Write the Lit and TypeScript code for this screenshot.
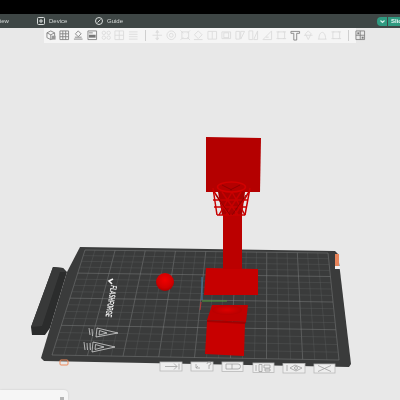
import { LitElement, html, css, svg } from "lit";
import { customElement } from "lit/decorators.js";

type P = [number, number];

function homography(q: P[]) {
  const [[x0, y0], [x1, y1], [x2, y2], [x3, y3]] = q;
  const dx1 = x1 - x2, dx2 = x3 - x2, sx = x0 - x1 + x2 - x3;
  const dy1 = y1 - y2, dy2 = y3 - y2, sy = y0 - y1 + y2 - y3;
  const d = dx1 * dy2 - dx2 * dy1;
  const g = (sx * dy2 - dx2 * sy) / d;
  const h = (dx1 * sy - sx * dy1) / d;
  const a = x1 - x0 + g * x1, b = x3 - x0 + h * x3;
  const c = y1 - y0 + g * y1, e = y3 - y0 + h * y3;
  return (u: number, v: number): P => {
    const w = g * u + h * v + 1;
    return [(a * u + b * v + x0) / w, (c * u + e * v + y0) / w];
  };
}

const gridMap = homography([[85, 250], [328, 253], [339, 360], [52, 355]]);
const COLS = 24;
const ROWS = 16;

const gridLines = () => {
  const out: unknown[] = [];
  for (let i = 0; i <= COLS; i++) {
    const [x1, y1] = gridMap(i / COLS, 0);
    const [x2, y2] = gridMap(i / COLS, 1);
    out.push(svg`<line class=${i % 3 === 0 ? "major" : "minor"} x1=${x1} y1=${y1} x2=${x2} y2=${y2}></line>`);
  }
  for (let j = 0; j <= ROWS; j++) {
    const [x1, y1] = gridMap(0, j / ROWS);
    const [x2, y2] = gridMap(1, j / ROWS);
    out.push(svg`<line class=${j % 4 === 0 ? "major" : "minor"} x1=${x1} y1=${y1} x2=${x2} y2=${y2}></line>`);
  }
  return out;
};

const icons = {
  cube: svg`<path d="M2 4l4-2 4 2v5l-4 2-4-2z M2 4l4 2 4-2 M6 6v5"/><rect x="7" y="7" width="4" height="4" fill="#999" stroke="none"/>`,
  grid: svg`<path d="M2 2h9v9H2z M2 5h9 M2 8h9 M5 2v9 M8 2v9"/>`,
  erase: svg`<path d="M6.5 2l3 3-3 3-3-3z M2 10.5h9 M3 8.5h7"/>`,
  layout: svg`<path d="M2 2h9v9H2z"/><rect x="3" y="6" width="7" height="3" fill="#777" stroke="none"/><path d="M3 4h4"/>`,
  hexes: svg`<circle cx="4" cy="4" r="1.8"/><circle cx="9" cy="4" r="1.8"/><circle cx="4" cy="9" r="1.8"/><circle cx="9" cy="9" r="1.8"/>`,
  box: svg`<path d="M2 2h9v9H2z M2 6.5h9 M6.5 2v9"/>`,
  lines: svg`<path d="M2 3h9 M2 5.5h9 M2 8h9 M2 10.5h9"/>`,
  move: svg`<path d="M6.5 1.5v10 M1.5 6.5h10 M6.5 1.5l-1.5 2h3z M6.5 11.5l-1.5-2h3z"/>`,
  rotate: svg`<circle cx="6.5" cy="6.5" r="4.5"/><circle cx="6.5" cy="6.5" r="2"/>`,
  scale: svg`<path d="M3 3h7v7H3z M1.5 1.5l3 3 M11.5 1.5l-3 3 M1.5 11.5l3-3 M11.5 11.5l-3-3"/>`,
  flat: svg`<path d="M6.5 2l4 4-4 4-4-4z M2 11h9"/>`,
  square: svg`<path d="M2 2.5h9v8H2z M6.5 2.5v8"/>`,
  cut: svg`<path d="M2 3h9v7H2z"/><rect x="4" y="4" width="5" height="5"/>`,
  half: svg`<path d="M2 2.5h4v8H2z M7 2.5h4l-4 8z"/>`,
  split: svg`<path d="M2 2h4v9H2z M7 11l4-9v9z"/>`,
  slant: svg`<path d="M2 11L11 2v9z M5 8.5h3"/>`,
  text: svg`<path d="M2 2.5h9v2h-3v7h-3v-7H2z"/>`,
  paint: svg`<path d="M6.5 2l3 3-3 6-3-6z M2 6.5h9"/>`,
  hat: svg`<path d="M2 10.5h9 M3 10.5c0-5 2-7 3.5-7s3.500 2 3.500 7"/>`,
  seam: svg`<path d="M3 3h7v7H3z M1.500 3h3 M8.500 3h3 M1.500 10h3 M8.500 10h3"/>`,
  assemble: svg`<path d="M2 2h9v9H2z M2 6.500h9 M6.500 2v9"/><rect x="3.500" y="3.500" width="2" height="2" fill="#777" stroke="none"/><rect x="8" y="8" width="2" height="2" fill="#777" stroke="none"/>`,
};

type Icon = keyof typeof icons;
const groupA: [Icon, boolean][] = [["cube", true], ["grid", true], ["erase", true], ["layout", true], ["hexes", false], ["box", false], ["lines", false]];
const groupB: [Icon, boolean][] = [
  ["move", false], ["rotate", false], ["scale", false], ["flat", false], ["square", false], ["cut", false], ["half", false],
  ["split", false], ["slant", false], ["seam", false], ["text", true], ["paint", false], ["hat", false], ["seam", false],
];
const groupC: [Icon, boolean][] = [["assemble", true]];

const flatButtons: { x: number; y: number; w: number; h: number; g: unknown }[] = [
  { x: 160, y: 362, w: 22, h: 9, g: svg`<path d="M165 366.500h12 M174 363.500l3 3-3 3 M179 363.500v6"/>` },
  { x: 191, y: 362, w: 22, h: 9, g: svg`<path d="M196 364v4h4 M198 366l-2 2 M207 364a2 2 0 0 1 4 0c0 1-2 1-2 1v4"/>` },
  { x: 222, y: 362, w: 21, h: 9.500, g: svg`<path d="M226 364h6v5h-6z M232 364h6a2.500 2.500 0 0 1 0 5h-6"/>` },
  { x: 253, y: 363, w: 21, h: 9.500, g: svg`<path d="M256 365v6 M259 364.500h3v7h-3z M264 365h6v3h-6z M265 369h5v2h-5z"/>` },
  { x: 283, y: 363.500, w: 22, h: 9.500, g: svg`<path d="M287 365v6 M290 368l5-3 7 3-6 3z"/><circle cx="296" cy="368" r="1.500"/>` },
  { x: 314, y: 364, w: 21, h: 9, g: svg`<path d="M318 365.500l13 6 M331 365.500l-13 6"/>` },
];

@customElement("app-root")
export class AppRoot extends LitElement {
  static styles = css`
    :host {
      display: block;
      width: 400px;
      height: 400px;
      overflow: hidden;
    }
    .page {
      position: relative;
      width: 400px;
      height: 400px;
      display: flex;
      flex-direction: column;
      background: #e8e8e8;
      overflow: hidden;
      filter: blur(0.5px);
      font-family: "Liberation Sans", Arial, sans-serif;
    }
    .topblack {
      height: 14px;
      flex: none;
      background: #000;
    }
    .menubar {
      height: 14px;
      flex: none;
      background: #3e4645;
      display: flex;
      align-items: center;
      color: #d8dcdb;
      font-size: 6px;
      overflow: hidden;
    }
    .menu {
      display: flex;
      align-items: center;
      gap: 4px;
    }
    .menu svg {
      width: 8px;
      height: 8px;
      flex: none;
      fill: none;
      stroke: #d8dcdb;
      stroke-width: 1;
    }
    .view {
      margin-left: -4px;
      width: 41px;
      flex: none;
    }
    .device {
      width: 58px;
      flex: none;
    }
    .slice {
      margin-left: auto;
      display: flex;
      gap: 1px;
      height: 9px;
      width: 23px;
      flex: none;
      color: #e9f5f2;
      font-weight: bold;
    }
    .slice .drop {
      width: 10px;
      background: #2f9a80;
      border-radius: 4px 0 0 4px;
      display: flex;
      align-items: center;
      justify-content: center;
    }
    .slice .drop svg {
      width: 5px;
      height: 5px;
      fill: none;
      stroke: #d5efe8;
      stroke-width: 1.200;
    }
    .slice .go {
      flex: 1;
      background: #2f9a80;
      padding-left: 3px;
      line-height: 9px;
      overflow: hidden;
    }
    .toolbar {
      flex: none;
      align-self: center;
      width: 312px;
      height: 15px;
      box-sizing: border-box;
      padding-left: 0.500px;
      background: #f5f5f5;
      display: flex;
      align-items: center;
      gap: 1.250px;
    }
    .tool {
      width: 12.500px;
      height: 12.500px;
      flex: none;
      fill: none;
      stroke: #808080;
      stroke-width: 0.900;
    }
    .tool.faded {
      opacity: 0.22;
    }
    .sep {
      width: 1px;
      height: 11px;
      margin: 0 4px;
      flex: none;
      background: #cfcfcf;
    }
    .scene {
      flex: 1;
      min-height: 0;
      display: block;
    }
    .bed {
      fill: #3a3b3b;
    }
    .handle {
      fill: #2b2c2c;
    }
    .handle-top {
      fill: #383939;
    }
    .major {
      stroke: #7d7f7f;
      stroke-width: 0.500;
    }
    .minor {
      stroke: #5b5d5d;
      stroke-width: 0.400;
    }
    .logo {
      fill: #f4f4f4;
      font-size: 9px;
      font-weight: bold;
      font-family: "Liberation Sans", Arial, sans-serif;
    }
    .warn {
      fill: none;
      stroke: #e6e6e6;
      stroke-width: 0.700;
    }
    .flatbtn {
      fill: #eeeeee;
      stroke: #b8b8b8;
      stroke-width: 0.800;
    }
    .flatglyph {
      fill: none;
      stroke: #a0a0a0;
      stroke-width: 0.800;
    }
    .net {
      fill: none;
      stroke: #c80000;
      stroke-width: 1.500;
    }
    .net-dark {
      fill: none;
      stroke: #8a0000;
      stroke-width: 0.900;
    }
    .panel {
      position: absolute;
      left: 0;
      bottom: 0;
      width: 68px;
      height: 10px;
      background: #f6f6f6;
      border-radius: 0 4px 0 0;
      box-shadow: 0 0 2px rgba(0, 0, 0, 0.15);
    }
    .panel i {
      position: absolute;
      right: 4px;
      top: 7px;
      width: 4px;
      height: 3px;
      background: #b5b5b5;
    }
  `;

  private toolGroup(list: [Icon, boolean][]) {
    return list.map(
      ([n, on]) => html`<svg class="tool ${on ? "" : "faded"}" viewBox="0 0 13 13">${icons[n]}</svg>`
    );
  }

  render() {
    return html`
      <div class="page">
        <div class="topblack"></div>
        <div class="menubar">
          <span class="menu view">View</span>
          <span class="menu device">
            <svg viewBox="0 0 8 8"><rect x="0.500" y="0.500" width="7" height="7" rx="1"></rect><path d="M3 3h2v2H3z"></path></svg>
            Device
          </span>
          <span class="menu">
            <svg viewBox="0 0 8 8"><circle cx="4" cy="4" r="3.500"></circle><path d="M2.500 5.500L5.500 2.500"></path></svg>
            Guide
          </span>
          <div class="slice">
            <span class="drop"><svg viewBox="0 0 5 5"><path d="M0.500 1.500L2.500 3.500L4.500 1.500"></path></svg></span>
            <span class="go">Slice</span>
          </div>
        </div>
        <div class="toolbar">
          ${this.toolGroup(groupA)}
          <span class="sep"></span>
          ${this.toolGroup(groupB)}
          <span class="sep"></span>
          ${this.toolGroup(groupC)}
        </div>
        <svg class="scene" viewBox="0 43 400 357">
          <defs>
            <radialGradient id="ball" cx="0.500" cy="0.400" r="0.600">
              <stop offset="0" stop-color="#f00000"></stop>
              <stop offset="0.700" stop-color="#d00000"></stop>
              <stop offset="1" stop-color="#a80000"></stop>
            </radialGradient>
            <radialGradient id="dent" cx="0.500" cy="0.500" r="0.500">
              <stop offset="0" stop-color="#dc0000"></stop>
              <stop offset="1" stop-color="#b80000"></stop>
            </radialGradient>
          </defs>

          <polygon class="handle" points="53,267 63,268 67,272 50,328 45,335 32,335 31,327"></polygon>
          <polygon class="handle-top" points="53,267 63,268 66,272 60,272 42,326 31,327"></polygon>
          <polygon class="bed" points="80,247 335,251 338,254 351,364 349,367 44,361 41,358 50,328 67,272"></polygon>
          ${gridLines()}

          <text class="logo" textLength="32" lengthAdjust="spacingAndGlyphs" transform="translate(111,285) rotate(100)">FLASHFORGE</text>
          <path d="M113 279l-4 2 3 3" fill="none" stroke="#f4f4f4" stroke-width="1.600"></path>

          <polygon class="warn" points="97,328 118,333 96,337"></polygon>
          <polygon class="warn" points="99.500,330.500 107,333 99,335" fill="#e6e6e6"></polygon>
          <polygon class="warn" points="93,342 115,347 92,352"></polygon>
          <polygon class="warn" points="95.500,344.500 104,347 95,349.500" fill="#e6e6e6"></polygon>
          <path class="warn" d="M89 328l1 7 M92 329l0.500 7 M84 342l1 8 M87 343l0.500 7 M90 343l0.500 7"></path>

          <rect x="60" y="360" width="8" height="5" rx="1" fill="none" stroke="#ef8a5a" stroke-width="1"></rect>
          <rect x="335" y="254" width="4" height="12" fill="#e8845a"></rect>
          <rect x="335" y="266" width="5" height="3" fill="#f1f1f1"></rect>

          <circle cx="165" cy="282" r="9" fill="url(#ball)"></circle>

          <line x1="202" y1="277" x2="202" y2="300" stroke="#3f7fa8" stroke-width="1"></line>
          <line x1="202" y1="301" x2="227" y2="301" stroke="#4f9a3a" stroke-width="1"></line>
          <line x1="201" y1="302" x2="200" y2="310" stroke="#b8383a" stroke-width="1"></line>

          <polygon points="206,268 258,269 258,295 204,295" fill="#c60000"></polygon>
          <rect x="223" y="213" width="19" height="56" fill="#bb0000"></rect>
          <polygon points="206,137 261,138 260,192 206,192" fill="#b40000"></polygon>

          <polygon points="218,192 245,192 242,215 222,215" fill="#aa0000"></polygon>
          <path class="net" d="M213 188l4 27 M250 188l-5 27 M217 215h28"></path>
          <path class="net" d="M213 190l16 25 M222 192l16 23 M232 192l13 23 M250 190l-15 25 M241 192l-15 23 M232 192l-13 23 M213 200l35 0 M214 207l33 0"></path>
          <path class="net-dark" d="M216 195l14 20 M246 195l-14 20"></path>
          <ellipse cx="231.500" cy="187" rx="14" ry="5" fill="none" stroke="#d20000" stroke-width="1.500"></ellipse>
          <path class="net-dark" d="M222 185l10 5 M240 185l-10 5"></path>

          <polygon points="207,322 245,322 244,356 205,354" fill="#c80000"></polygon>
          <polygon points="212,305 248,305 246,322 207,320" fill="#c00000"></polygon>
          <polygon points="207,320 246,322 245,324 207,322" fill="#a40000"></polygon>
          <ellipse cx="227" cy="310" rx="15" ry="5" fill="url(#dent)"></ellipse>

          ${flatButtons.map(
            (b) => svg`
              <rect class="flatbtn" x=${b.x} y=${b.y} width=${b.w} height=${b.h}></rect>
              <g class="flatglyph">${b.g}</g>
            `
          )}
        </svg>
        <div class="panel"><i></i></div>
      </div>
    `;
  }
}
